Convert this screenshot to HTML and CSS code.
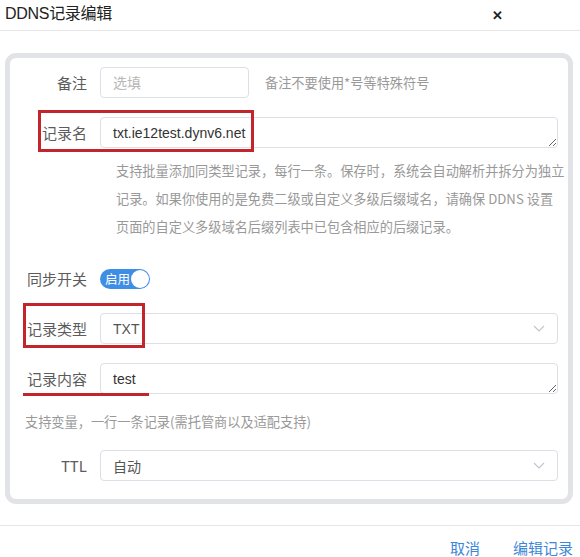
FILE: index.html
```html
<!DOCTYPE html>
<html lang="zh-CN">
<head>
<meta charset="utf-8">
<title>DDNS记录编辑</title>
<link rel="stylesheet" href="styles.css">
</head>
<body>
<div class="dialog">
  <div class="dialog-header">
    <span class="dialog-title">DDNS记录编辑</span>
    <span class="dialog-close">✕</span>
  </div>

  <div class="dialog-body">
    <div class="card">
      <div class="row">
        <label class="label">备注</label>
        <input class="input input-short" type="text" placeholder="选填">
        <span class="hint">备注不要使用*号等特殊符号</span>
      </div>

      <div class="row row-gap">
        <label class="label">记录名</label>
        <textarea class="input textarea">txt.ie12test.dynv6.net</textarea>
      </div>
      <div class="help help-indent">支持批量添加同类型记录，每行一条。保存时，系统会自动解析并拆分为独立<br>记录。如果你使用的是免费二级或自定义多级后缀域名，请确保 DDNS 设置<br>页面的自定义多级域名后缀列表中已包含相应的后缀记录。</div>

      <div class="row row-switch">
        <label class="label">同步开关</label>
        <span class="switch"><span class="switch-text">启用</span><span class="switch-knob"></span></span>
      </div>

      <div class="row row-gap">
        <label class="label">记录类型</label>
        <div class="input select">
          <span>TXT</span>
          <svg class="chevron" width="12" height="7" viewBox="0 0 12 7"><path d="M1 1l5 5 5-5" fill="none" stroke="#c0c4cc" stroke-width="1.1"/></svg>
        </div>
      </div>

      <div class="row row-gap">
        <label class="label">记录内容</label>
        <textarea class="input textarea">test</textarea>
      </div>
      <div class="help help-plain">支持变量，一行一条记录(需托管商以及适配支持)</div>

      <div class="row row-ttl">
        <label class="label">TTL</label>
        <div class="input select">
          <span>自动</span>
          <svg class="chevron" width="12" height="7" viewBox="0 0 12 7"><path d="M1 1l5 5 5-5" fill="none" stroke="#c0c4cc" stroke-width="1.1"/></svg>
        </div>
      </div>

      <span class="mark mark-name"></span>
      <span class="mark mark-type"></span>
      <span class="mark-line"></span>
    </div>
  </div>

  <div class="dialog-footer">
    <span class="btn-text">取消</span>
    <span class="btn-text">编辑记录</span>
  </div>
</div>
</body>
</html>
```

FILE: styles.css
```css
* {
  box-sizing: border-box;
}

html, body {
  margin: 0;
  background: #ffffff;
}

body {
  font-family: "Noto Sans CJK SC", "Noto Sans", sans-serif;
  color: #606266;
  overflow: hidden;
}

.dialog-header {
  height: 31px;
  padding: 0 5px;
  display: flex;
  align-items: center;
  justify-content: space-between;
  border-bottom: 1px solid #e6e6e6;
}

.dialog-title {
  font-family: "Liberation Sans", "Noto Sans CJK SC", sans-serif;
  font-size: 16px;
  line-height: 20px;
  color: #222;
  margin-top: -2px;
  letter-spacing: -0.3px;
}

.dialog-close {
  font-size: 13px;
  font-weight: bold;
  color: #222;
  margin-right: 72px;
  margin-top: -2px;
}

.dialog-body {
  padding: 22px 7px 21px 5px;
}

.card {
  position: relative;
  border: 5px solid #e2e3e6;
  border-radius: 11px;
  padding: 9px 10px 18px 15px;
}

.row {
  display: flex;
  align-items: center;
}

.row-gap {
  margin-top: 19px;
}

.row-switch {
  margin-top: 22px;
  height: 31px;
}

.row-ttl {
  margin-top: 14px;
}

.label {
  width: 75px;
  flex: none;
  padding-right: 13px;
  text-align: right;
  font-size: 15px;
  color: #5c5c5c;
}

.input {
  height: 31px;
  border: 1px solid #dcdfe6;
  border-radius: 4px;
  padding: 0 12px;
  font-family: "Liberation Sans", "Noto Sans CJK SC", sans-serif;
  font-size: 14px;
  color: #333;
  background: #fff;
  outline: none;
}

.input-short {
  width: 149px;
  flex: none;
}

.input::placeholder {
  color: #b8b8b8;
}

.textarea {
  flex: 1;
  resize: vertical;
  line-height: 18px;
  padding-top: 6px;
  padding-bottom: 5px;
  overflow: hidden;
}

.select {
  flex: 1;
  display: flex;
  align-items: center;
  justify-content: space-between;
  padding-right: 12px;
  color: #555;
}

.hint {
  margin-left: 16px;
  font-size: 13.2px;
  color: #999;
}

.help {
  font-size: 13.2px;
  line-height: 28px;
  color: #999;
}

.help-indent {
  margin: 9px -10px 0 91px;
  white-space: nowrap;
}

.help-plain {
  margin-top: 14px;
}

.switch {
  position: relative;
  width: 50px;
  height: 20px;
  border-radius: 10px;
  background: #3f8ee5;
  display: flex;
  align-items: center;
}

.switch-text {
  font-size: 12.5px;
  line-height: 20px;
  color: #fff;
  padding-left: 5px;
}

.switch-knob {
  position: absolute;
  right: 1px;
  top: 1px;
  width: 18px;
  height: 18px;
  border-radius: 50%;
  background: #fff;
}

/* annotation outlines drawn over the form */
.mark {
  position: absolute;
  border: 3px solid #c3252c;
  pointer-events: none;
}

.mark-name {
  left: 28px;
  top: 52px;
  width: 216px;
  height: 42px;
}

.mark-type {
  left: 13px;
  top: 245px;
  width: 122px;
  height: 45px;
}

.mark-line {
  position: absolute;
  left: 13px;
  top: 335px;
  width: 126px;
  height: 3px;
  background: #c3252c;
}

.dialog-footer {
  border-top: 1px solid #e6e6e6;
  display: flex;
  justify-content: flex-end;
  gap: 33px;
  padding: 13px 7px 0 0;
}

.btn-text {
  font-size: 15px;
  line-height: 17px;
  color: #3b87d6;
}
```
